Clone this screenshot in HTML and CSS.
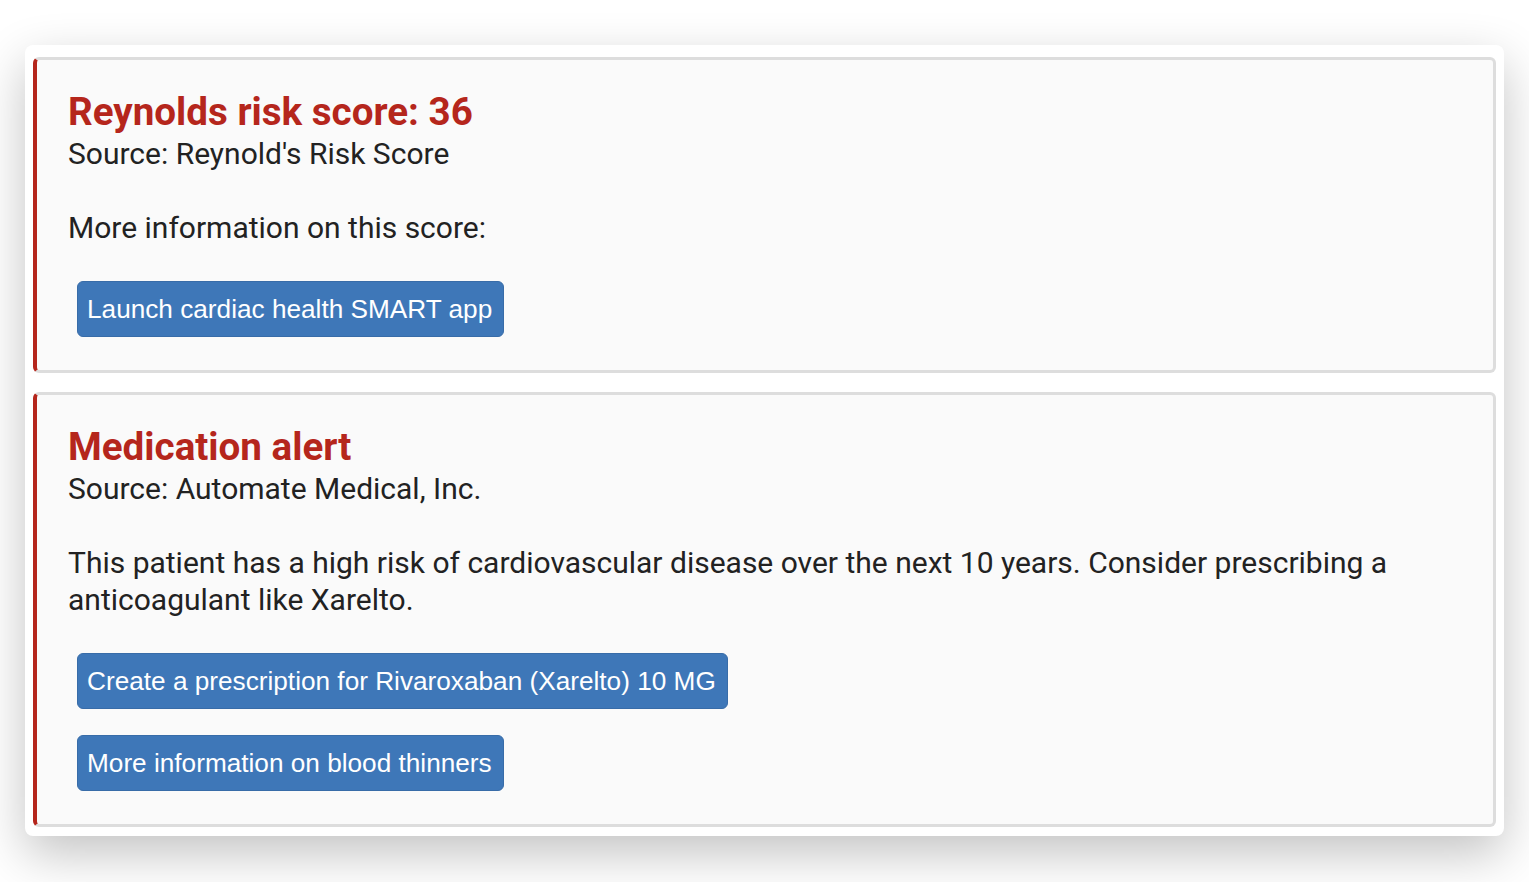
FILE: index.html
```
<!DOCTYPE html>
<html>
<head>
<meta charset="utf-8">
<link rel="stylesheet" href="styles.css">
</head>
<body>
<div class="panel">
  <div class="card">
    <h2 class="title">Reynolds risk score: 36</h2>
    <div class="source">Source: Reynold's Risk Score</div>
    <p class="detail">More information on this score:</p>
    <div class="actions">
      <button class="btn">Launch cardiac health SMART app</button>
    </div>
  </div>
  <div class="card">
    <h2 class="title">Medication alert</h2>
    <div class="source">Source: Automate Medical, Inc.</div>
    <p class="detail">This patient has a high risk of cardiovascular disease over the next 10 years. Consider prescribing a anticoagulant like Xarelto.</p>
    <div class="actions">
      <button class="btn">Create a prescription for Rivaroxaban (Xarelto) 10 MG</button>
      <button class="btn">More information on blood thinners</button>
    </div>
  </div>
</div>
</body>
</html>
```
FILE: styles.css
```
html, body {
  margin: 0;
  padding: 0;
  background: #ffffff;
}
body {
  font-family: Roboto, "Liberation Sans", sans-serif;
  color: #222222;
  padding: 45px 25px 60px 25px;
}
.panel {
  background: #ffffff;
  border-radius: 8px;
  box-shadow: 0 18px 50px rgba(0, 0, 0, 0.24);
  padding: 12px 8px 9px 8px;
  display: flex;
  flex-direction: column;
  gap: 19px;
}
.card {
  background: #fafafa;
  border: 3px solid #dddddd;
  border-left: 4px solid #b5261c;
  border-radius: 6px;
  padding: 29px 30px 33px 31px;
}
.title {
  margin: 0;
  font-size: 38.6px;
  line-height: 46px;
  font-weight: 700;
  color: #b5261c;
}
.source {
  font-size: 30px;
  line-height: 37px;
}
.detail {
  margin: 37px 0 0 0;
  font-size: 30px;
  line-height: 37px;
}
.actions {
  display: flex;
  flex-direction: column;
  align-items: flex-start;
  gap: 26px;
  margin-top: 35px;
  padding-left: 9px;
}
.btn {
  font-family: "Liberation Sans", Arial, sans-serif;
  font-size: 26.2px;
  line-height: 36px;
  color: #ffffff;
  background: #3e77b8;
  border: 1px solid #386ca8;
  border-radius: 6px;
  padding: 9px 11px 9px 9px;
  cursor: pointer;
}
```
